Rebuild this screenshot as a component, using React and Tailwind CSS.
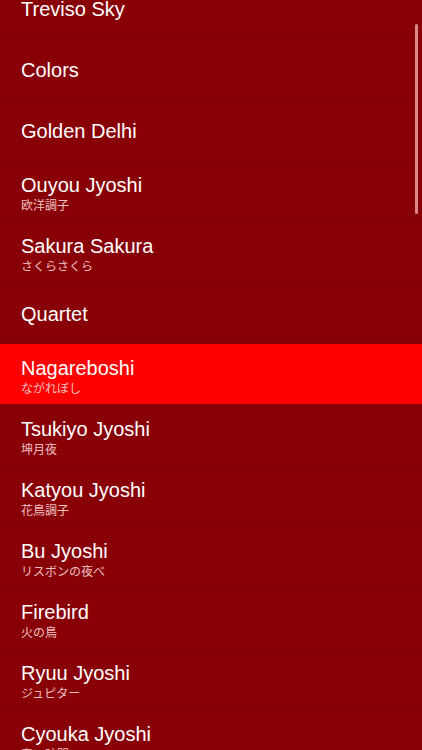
import React from "react";

const items = [
  { t: "Treviso Sky" },
  { t: "Colors" },
  { t: "Golden Delhi" },
  { t: "Ouyou Jyoshi", s: "欧洋調子" },
  { t: "Sakura Sakura", s: "さくらさくら" },
  { t: "Quartet" },
  { t: "Nagareboshi", s: "ながれぼし", active: true },
  { t: "Tsukiyo Jyoshi", s: "坤月夜" },
  { t: "Katyou Jyoshi", s: "花鳥調子" },
  { t: "Bu Jyoshi", s: "リスボンの夜べ" },
  { t: "Firebird", s: "火の鳥" },
  { t: "Ryuu Jyoshi", s: "ジュピター" },
  { t: "Cyouka Jyoshi", s: "春の時間" },
];

export default function App() {
  return (
    <div
      className="relative w-[422px] h-[750px] overflow-hidden bg-[#880005]"
      style={{ fontFamily: '"Liberation Sans", Arial, "Noto Sans CJK JP", sans-serif' }}
    >
      <div className="-mt-[22px] flex flex-col">
        {items.map((it) => (
          <div
            key={it.t}
            className={
              "h-[61px] flex flex-col justify-center pl-[21px] pt-[2px] border-b border-[#80000a] " +
              (it.active ? "bg-[#ff0000]" : "")
            }
          >
            <div className="text-[20px] leading-[25px] text-white">{it.t}</div>
            {it.s && (
              <div
                className="text-[12px] leading-[14px] text-[#efc0c2]"
                style={{ fontFamily: '"Noto Sans CJK JP", sans-serif' }}
              >
                {it.s}
              </div>
            )}
          </div>
        ))}
      </div>
      <div className="absolute right-[4px] top-[24px] w-[3px] h-[190px] rounded-full bg-[#d98a8c]" />
    </div>
  );
}
